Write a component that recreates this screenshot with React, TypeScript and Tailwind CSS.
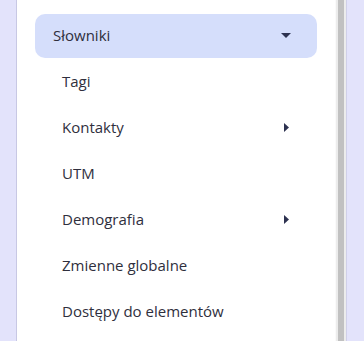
const items: { label: string; arrow?: boolean }[] = [
  { label: "Tagi" },
  { label: "Kontakty", arrow: true },
  { label: "UTM" },
  { label: "Demografia", arrow: true },
  { label: "Zmienne globalne" },
  { label: "Dostępy do elementów" },
];

export default function App() {
  return (
    <div className="flex h-[341px] w-[364px] overflow-hidden bg-[#e3e3fb] font-['Open_Sans',sans-serif] text-[15px] text-[#2f2f3d]">
      {/* left edge */}
      <div className="w-[17px] shrink-0 border-r border-[#c8c8e4] bg-[#e3e3fb]" />

      {/* menu panel */}
      <div className="flex w-[318px] flex-col bg-white pt-[14px] pl-[18px]">
        <div className="flex h-[44px] w-[282px] items-center justify-between rounded-[10px] bg-[#d5defb] pb-[2px] pl-[18px] pr-[26px]">
          <span>Słowniki</span>
          <svg width="10" height="5" viewBox="0 0 10 5">
            <path d="M0 0h10L5 5z" fill="#2d3250" />
          </svg>
        </div>
        <div className="flex flex-col">
          {items.map((item) => (
            <div
              key={item.label}
              className="flex h-[46px] w-[282px] items-center justify-between pl-[27px] pr-[28px]"
            >
              <span>{item.label}</span>
              {item.arrow && (
                <svg width="5" height="9" viewBox="0 0 5 9">
                  <path d="M0 0l5 4.5L0 9z" fill="#2d3250" />
                </svg>
              )}
            </div>
          ))}
        </div>
      </div>

      {/* scrollbar */}
      <div className="flex shrink-0">
        <div className="w-[1px] bg-[#fafafa]" />
        <div className="w-[2px] bg-[#ececec]" />
        <div className="w-[6px] bg-[#c1c1c1]" />
        <div className="w-[2px] bg-[#ececec]" />
        <div className="w-[1px] bg-[#d0d0e8]" />
      </div>

      {/* right edge */}
      <div className="flex-1 bg-[#e3e3fb]" />
    </div>
  );
}
